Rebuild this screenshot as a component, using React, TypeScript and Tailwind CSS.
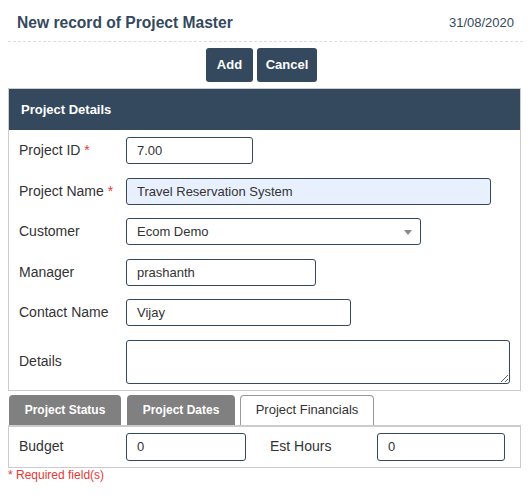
import React from "react";

const Label = ({ text, required }: { text: string; required?: boolean }) => (
  <div className="w-[107px] shrink-0 text-[14px] text-[#333]">
    {text}
    {required && <span className="text-[#e53935]"> *</span>}
  </div>
);

const inputCls =
  "h-[27px] rounded-[3px] border border-[#34495e] px-[10px] text-[13px] text-[#333] outline-none";

const App = () => {
  return (
    <div className="w-[531px] px-2 font-['Liberation_Sans',Arial,sans-serif] bg-white min-h-[498px]">
      {/* header */}
      <div className="flex h-[42px] items-center justify-between border-b border-dashed border-[#ddd] px-[9px] pt-[5px]">
        <h1 className="text-[15.6px] font-bold text-[#34495e]">
          New record of Project Master
        </h1>
        <span className="text-[13px] text-[#34495e]">31/08/2020</span>
      </div>

      <div className="mt-[6px] flex justify-center gap-[4px] pr-2">
        <button className="h-[34px] w-[47px] rounded-[3px] bg-[#34495e] text-[13px] font-bold text-white">
          Add
        </button>
        <button className="h-[34px] w-[60px] rounded-[3px] bg-[#34495e] text-[13px] font-bold text-white">
          Cancel
        </button>
      </div>

      {/* Project Details panel */}
      <div className="mt-[6px] w-[513px] border border-[#ccc]">
        <div className="flex h-[41px] items-center bg-[#34495e] px-[12px] text-[13px] font-bold text-white">
          Project Details
        </div>
        <div className="flex flex-col gap-[13.5px] px-[10px] pb-[6px] pt-[7px]">
          <div className="flex items-center">
            <Label text="Project ID" required />
            <input className={`${inputCls} w-[127px]`} defaultValue="7.00" />
          </div>
          <div className="flex items-center">
            <Label text="Project Name" required />
            <input
              className={`${inputCls} w-[365px] bg-[#e8f0fe]`}
              defaultValue="Travel Reservation System"
            />
          </div>
          <div className="flex items-center">
            <Label text="Customer" />
            <div className={`${inputCls} relative flex w-[295px] items-center`}>
              Ecom Demo
              <span className="absolute right-[8px] top-[11px] h-0 w-0 border-x-[4px] border-t-[5px] border-x-transparent border-t-[#888]" />
            </div>
          </div>
          <div className="flex items-center">
            <Label text="Manager" />
            <input className={`${inputCls} w-[190px]`} defaultValue="prashanth" />
          </div>
          <div className="flex items-center">
            <Label text="Contact Name" />
            <input className={`${inputCls} w-[225px]`} defaultValue="Vijay" />
          </div>
          <div className="flex items-center">
            <Label text="Details" />
            <textarea className="block h-[44px] w-[389px] rounded-[3px] border border-[#34495e] px-[10px] text-[13px] outline-none" />
          </div>
        </div>
      </div>

      {/* tabs */}
      <div className="mt-[4px] flex gap-[5px] pl-px">
        <div className="flex h-[30px] w-[112px] items-center justify-center rounded-t-[4px] bg-[#808080] text-[12px] font-bold text-white">
          Project Status
        </div>
        <div className="ml-px flex h-[30px] w-[108px] items-center justify-center rounded-t-[4px] bg-[#808080] text-[12px] font-bold text-white">
          Project Dates
        </div>
        <div className="flex h-[30px] w-[134px] items-center justify-center rounded-t-[4px] border border-b-0 border-[#999] bg-white text-[13px] text-[#333]">
          Project Financials
        </div>
      </div>
      <div className="flex h-[43px] w-[513px] items-center border border-t-2 border-[#ccc] px-[10px]">
        <Label text="Budget" />
        <input className={`${inputCls} h-[28px] w-[120px]`} defaultValue="0" />
        <div className="ml-[24px] w-[107px] text-[14px] text-[#333]">Est Hours</div>
        <input className={`${inputCls} h-[28px] w-[128px]`} defaultValue="0" />
      </div>
      <div className="text-[12px] leading-[14px] text-[#e53935]">* Required field(s)</div>
    </div>
  );
};

export default App;
